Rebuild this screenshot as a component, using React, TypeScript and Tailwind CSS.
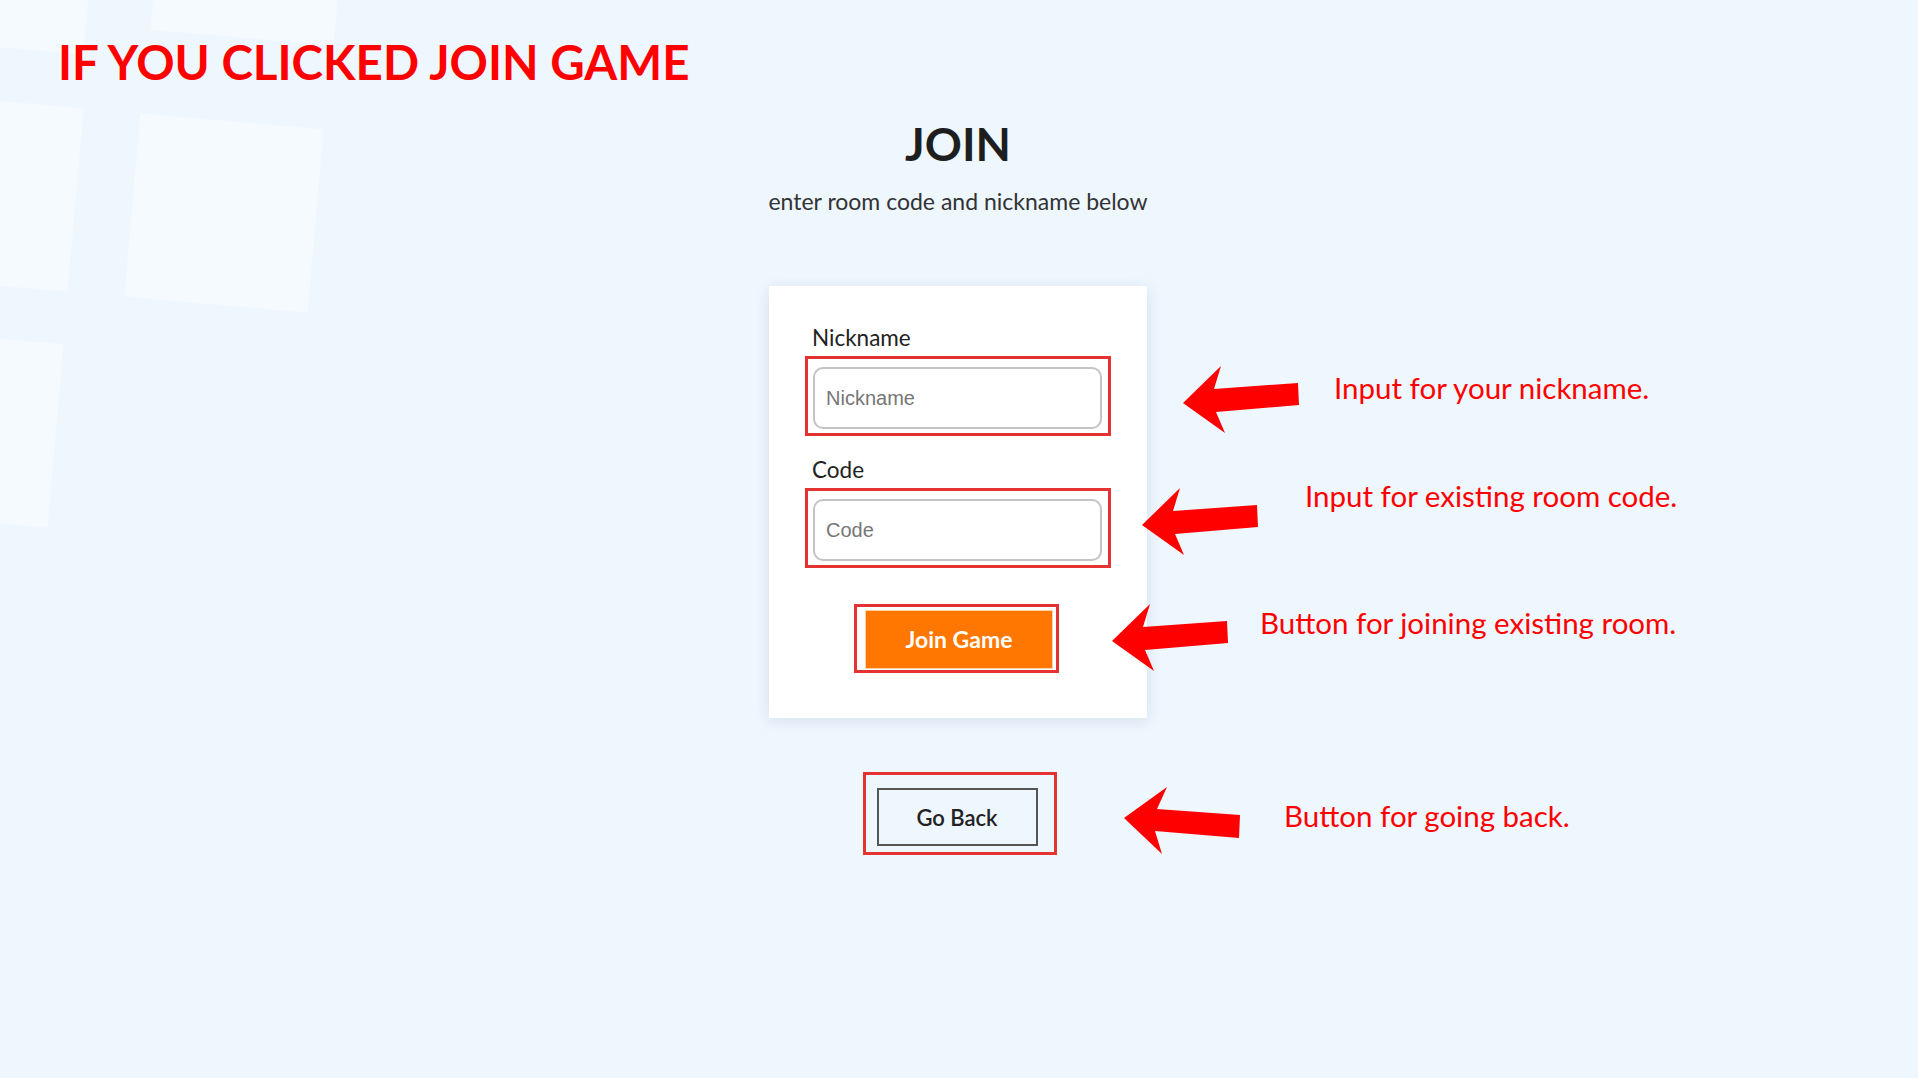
import React from 'react';

const ARROW_UP = '0,37 38,0 31,23 115,17 116,39 33,46 42,67';
const ARROW_DOWN = '0,31 43,0 33,22 116,28 115,51 31,44 38,67';

interface Note {
  text: string;
  rowClass: string;
  arrowClass: string;
  textClass: string;
  points: string;
}

const notes: Note[] = [
  {
    text: 'Input for your nickname.',
    rowClass: 'mt-[281px]',
    arrowClass: 'ml-[36px]',
    textClass: 'ml-[34px] mt-[4px]',
    points: ARROW_UP,
  },
  {
    text: 'Input for existing room code.',
    rowClass: 'mt-[44px]',
    arrowClass: '-ml-[5px] mt-[10px]',
    textClass: 'ml-[46px]',
    points: ARROW_UP,
  },
  {
    text: 'Button for joining existing room.',
    rowClass: 'mt-[48px]',
    arrowClass: '-ml-[35px]',
    textClass: 'ml-[31px] mt-[1px]',
    points: ARROW_UP,
  },
  {
    text: 'Button for going back.',
    rowClass: 'mt-[115px]',
    arrowClass: '-ml-[23px]',
    textClass: 'ml-[43px] mt-[11px]',
    points: ARROW_DOWN,
  },
];

function Arrow({ points, className }: { points: string; className: string }) {
  return (
    <svg width="117" height="68" viewBox="0 0 117 68" className={`shrink-0 ${className}`}>
      <polygon points={points} fill="#ff0000" />
    </svg>
  );
}

function Field({ label, top }: { label: string; top: string }) {
  return (
    <>
      <label className={`${top} pl-[7px] text-[22.5px] leading-[28px] text-[#222]`}>{label}</label>
      <div className="mt-[4px] border-[3px] border-[#e53333] pt-[8px] pb-[4px] pl-[5px] pr-[6px]">
        <input
          placeholder={label}
          className="block h-[62px] w-full rounded-[10px] border-2 border-[#c4c4c4] bg-white pl-[11px] font-['Liberation_Sans',Arial,sans-serif] text-[20px] text-[#222] outline-none placeholder:text-[#767676]"
        />
      </div>
    </>
  );
}

export default function App() {
  return (
    <div className="relative min-h-screen overflow-hidden bg-[#eef6fe] font-['Lato',sans-serif]">
      <div aria-hidden className="absolute inset-0">
        <div className="absolute left-[-92px] top-[-137px] h-[184px] w-[184px] rotate-[5deg] bg-[#f5faff]" />
        <div className="absolute left-[158px] top-[-146px] h-[184px] w-[184px] rotate-[5deg] bg-[#f5faff]" />
        <div className="absolute left-[-108px] top-[100px] h-[184px] w-[184px] rotate-[5deg] bg-[#f5faff]" />
        <div className="absolute left-[132px] top-[121px] h-[184px] w-[184px] rotate-[5deg] bg-[#f5faff]" />
        <div className="absolute left-[-128px] top-[336px] h-[184px] w-[184px] rotate-[5deg] bg-[#f5faff]" />
      </div>

      <div className="relative">
        <h1 className="pl-[58px] pt-[38px] text-[47.5px] font-bold leading-[47px] text-[#ff0000]">
          IF YOU CLICKED JOIN GAME
        </h1>

        <div className="grid grid-cols-[769px_378px_1fr]">
          <div />

          <main className="flex flex-col items-center">
            <h2 className="mt-[36px] text-[46px] font-bold leading-none text-[#1e1e1e]">JOIN</h2>
            <p className="mt-[20px] whitespace-nowrap text-[23px] leading-[28px] text-[#333]">
              enter room code and nickname below
            </p>

            <div className="mt-[71px] flex w-[378px] flex-col bg-white px-[36px] pt-[38px] pb-[45px] shadow-[0_3px_14px_rgba(40,70,120,0.12)]">
              <Field label="Nickname" top="mt-0" />
              <Field label="Code" top="mt-[20px]" />
              <div className="mt-[36px] -ml-[3px] self-center border-[3px] border-[#e53333] pt-[3px] pb-[1px] pl-[8px] pr-[3px]">
                <button className="h-[59px] w-[188px] border border-[#ffd2a8] bg-[#ff7700] text-[23px] font-bold text-white">
                  Join Game
                </button>
              </div>
            </div>

            <div className="mt-[54px] ml-[3px] border-[3px] border-[#e53333] pt-[13px] pb-[6px] pl-[11px] pr-[16px]">
              <button className="h-[58px] w-[161px] border-2 border-[#555] bg-transparent text-[22px] font-semibold text-[#222]">
                Go Back
              </button>
            </div>
          </main>

          <aside className="flex flex-col">
            {notes.map((n) => (
              <div key={n.text} className={`flex items-start ${n.rowClass}`}>
                <Arrow points={n.points} className={n.arrowClass} />
                <span className={`whitespace-nowrap text-[29.5px] leading-[36px] text-[#ff0000] ${n.textClass}`}>
                  {n.text}
                </span>
              </div>
            ))}
          </aside>
        </div>
      </div>
    </div>
  );
}
